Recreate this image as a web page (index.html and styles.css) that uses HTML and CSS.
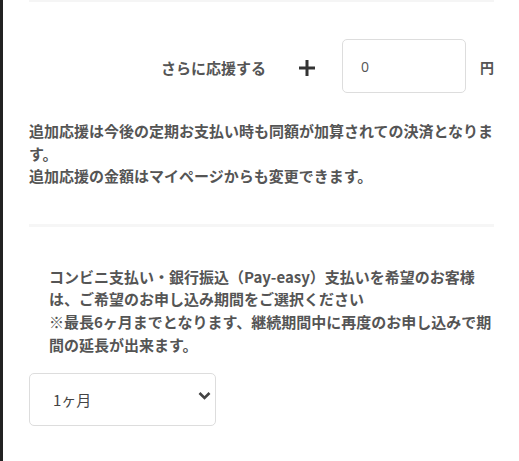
FILE: index.html
```html
<!DOCTYPE html>
<html lang="ja">
<head>
<meta charset="utf-8">
<link rel="stylesheet" href="styles.css">
</head>
<body>
<div class="page">
  <div class="sidebar"></div>
  <main class="content">
    <div class="topline"></div>
    <div class="support-row">
      <span class="label">さらに応援する</span>
      <span class="plus">
        <svg width="18" height="18" viewBox="0 0 18 18"><path d="M9 1v16M1 9h16" stroke="#333" stroke-width="3" fill="none"/></svg>
      </span>
      <div class="amount">0</div>
      <span class="yen">円</span>
    </div>
    <p class="note">追加応援は今後の定期お支払い時も同額が加算されての決済となります。<br>追加応援の金額はマイページからも変更できます。</p>
    <div class="divider"></div>
    <p class="note indent">コンビニ支払い・銀行振込（Pay-easy）支払いを希望のお客様は、ご希望のお申し込み期間をご選択ください<br>※最長6ヶ月までとなります、継続期間中に再度のお申し込みで期間の延長が出来ます。</p>
    <div class="select">
      <span>1ヶ月</span>
      <svg width="13" height="9" viewBox="0 0 13 9"><path d="M1.5 2l5 5 5-5" stroke="#444" stroke-width="2.6" fill="none"/></svg>
    </div>
  </main>
</div>
</body>
</html>
```

FILE: styles.css
```css
html, body {
  margin: 0;
  padding: 0;
  background: #fff;
}
body {
  font-family: "Noto Sans CJK JP", "Noto Sans", sans-serif;
  color: #555;
}
.page {
  display: flex;
  min-height: 461px;
}
.sidebar {
  width: 3px;
  background: #222;
  flex: none;
}
.content {
  margin-left: 26px;
  width: 465px;
}
.topline {
  height: 2px;
  background: #f5f5f5;
}
.support-row {
  display: flex;
  justify-content: flex-end;
  align-items: center;
  margin-top: 37px;
}
.label {
  font-size: 15px;
  font-weight: 700;
  line-height: 20px;
  margin-top: 3px;
}
.plus {
  display: flex;
  margin-left: 32px;
  margin-top: 4px;
}
.amount {
  box-sizing: border-box;
  width: 124px;
  height: 54px;
  margin-left: 26px;
  border: 1px solid #ddd;
  border-radius: 5px;
  padding-left: 18px;
  display: flex;
  align-items: center;
  font-family: "Open Sans", "Noto Sans", sans-serif;
  font-size: 14px;
  color: #555;
}
.yen {
  margin-left: 14px;
  font-size: 14px;
  font-weight: 700;
  line-height: 20px;
  margin-top: 2px;
}
.note {
  margin: 27px 0 0;
  font-size: 15px;
  font-weight: 700;
  line-height: 22.6px;
  line-break: strict;
}
.divider {
  height: 3px;
  background: #f6f6f6;
  margin-top: 36px;
}
.note.indent {
  margin-top: 39px;
  padding-left: 20px;
}
.select {
  box-sizing: border-box;
  width: 187px;
  height: 53px;
  margin-top: 17px;
  border: 1px solid #ddd;
  border-radius: 5px;
  display: flex;
  align-items: center;
  justify-content: space-between;
  padding: 0 4px 0 23px;
  font-size: 15px;
  color: #444;
}
.select svg {
  margin-top: -8px;
}
```
